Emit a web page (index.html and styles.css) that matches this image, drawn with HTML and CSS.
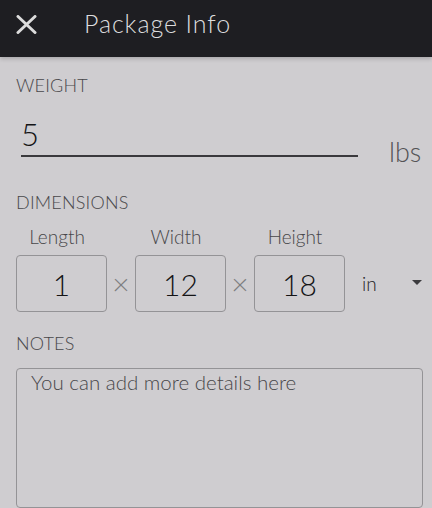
FILE: index.html
```html
<!DOCTYPE html>
<html lang="en">
<head>
  <meta charset="UTF-8" />
  <meta name="viewport" content="width=device-width, initial-scale=1.0" />
  <title>Package Info</title>
  <link rel="stylesheet" href="styles.css">
</head>
<body>
  <header class="topbar">
    <button class="close" aria-label="Close">
      <svg width="21" height="19" viewBox="0 0 21 19">
        <path d="M2 1.5 L19 17.5 M19 1.5 L2 17.5" stroke="#dcdcdc" stroke-width="3" stroke-linecap="round" fill="none"/>
      </svg>
    </button>
    <h1 class="title">Package Info</h1>
  </header>

  <main class="form">
    <!-- weight -->
    <div class="section-label weight-label">WEIGHT</div>
    <div class="weight-row">
      <div class="weight-field">5</div>
      <span class="unit">lbs</span>
    </div>

    <!-- dimensions -->
    <div class="section-label dim-label">DIMENSIONS</div>
    <div class="dims">
      <div class="dim">
        <span class="dim-name">Length</span>
        <div class="dim-box">1</div>
      </div>
      <span class="times">×</span>
      <div class="dim">
        <span class="dim-name">Width</span>
        <div class="dim-box">12</div>
      </div>
      <span class="times">×</span>
      <div class="dim">
        <span class="dim-name">Height</span>
        <div class="dim-box">18</div>
      </div>
      <div class="dim-unit">
        <span>in</span>
        <span class="caret"></span>
      </div>
    </div>

    <!-- notes -->
    <div class="section-label notes-label">NOTES</div>
    <div class="notes">You can add more details here</div>
  </main>
</body>
</html>
```

FILE: styles.css
```css
:root {
  --bg: #cfcdd0;
  --bar: #1e1e22;
  --label: #48474a;
  --text: #141416;
  --line: #949396;
}
* { box-sizing: border-box; }
body {
  margin: 0;
  font-family: "Lato", "Noto Sans", sans-serif;
  font-weight: 300;
  background: var(--bg);
  color: var(--text);
  height: 508px;
  overflow: hidden;
}

/* top bar */
.topbar {
  height: 57px;
  background: var(--bar);
  display: flex;
  align-items: center;
  padding-left: 16px;
  box-shadow: 0 2px 4px rgba(0,0,0,0.18);
}
.close {
  background: none;
  border: 0;
  padding: 0;
  width: 21px;
  height: 19px;
  display: flex;
  margin-top: -8px;
}
.title {
  margin: -12px 0 0 47px;
  font-weight: 300;
  font-size: 25px;
  color: #dcdcde;
  letter-spacing: 0.9px;
}

/* form */
.form { padding: 0 9px 0 16px; }
.section-label {
  font-size: 18px;
  color: var(--label);
  letter-spacing: 0.2px;
}
.weight-label { margin-top: 17px; }

.weight-row {
  display: flex;
  align-items: flex-end;
  margin-top: 21px;
}
.weight-field {
  flex-shrink: 0;
  width: 337px;
  margin-left: 5px;
  font-size: 31px;
  line-height: 34px;
  border-bottom: 2px solid #3a393c;
  padding-bottom: 4px;
}
.unit {
  margin-left: 31px;
  font-size: 27px;
  line-height: 26px;
  color: #545356;
  margin-bottom: -8px;
}

.dim-label { margin-top: 34px; }
.dims {
  display: flex;
  align-items: flex-end;
  margin-top: 13px;
}
.dim {
  display: flex;
  flex-direction: column;
  align-items: center;
}
.dim-name {
  font-size: 19px;
  color: var(--label);
  line-height: 22px;
  margin-bottom: 7px;
  margin-left: -9px;
}
.dim-box {
  width: 91px;
  height: 57px;
  border: 1.5px solid var(--line);
  border-radius: 4px;
  display: flex;
  align-items: center;
  justify-content: center;
  font-size: 30px;
}
.times {
  width: 28px;
  text-align: center;
  font-size: 30px;
  font-weight: 300;
  color: #7e7d80;
  line-height: 57px;
}
.dim-unit {
  flex: 1;
  display: flex;
  align-items: center;
  justify-content: space-between;
  height: 57px;
  padding-left: 17px;
  padding-right: 1px;
  font-size: 19px;
  color: #222224;
}
.caret {
  width: 0;
  height: 0;
  border-left: 5px solid transparent;
  border-right: 5px solid transparent;
  border-top: 5px solid #3c3b3e;
  margin-top: -2px;
}

.notes-label { margin-top: 20px; }
.notes {
  margin-top: 14px;
  height: 140px;
  border: 1.5px solid var(--line);
  border-radius: 4px;
  padding: 1px 14px;
  font-size: 20.5px;
  color: var(--label);
}
```
